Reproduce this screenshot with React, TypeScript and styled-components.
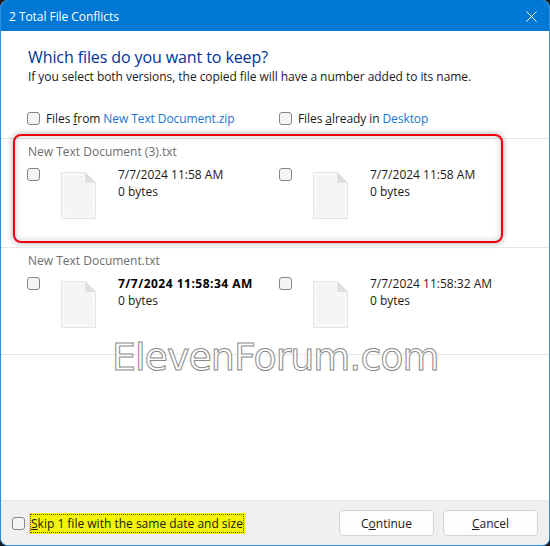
import styled, { createGlobalStyle } from 'styled-components';

const GlobalStyle = createGlobalStyle`
  html, body {
    margin: 0;
    padding: 0;
    background: #1c1c1c;
  }
`;

const FileIcon = () => (
  <svg width="35" height="47" viewBox="0 0 35 47" fill="none">
    <path d="M.5.5H24.5L34.5 10.5V46.5H.5Z" fill="#f8f8f8" stroke="#e4e4e4" />
    {Array.from({ length: 18 }, (_, i) => (
      <line key={i} x1="4" x2={i < 3 ? 23 : 31} y1={4.5 + i * 2.2} y2={4.5 + i * 2.2} stroke="#f0f0f0" />
    ))}
    <path d="M24.5.5V10.5H34.5Z" fill="#dedede" stroke="#e4e4e4" />
  </svg>
);

const CloseIcon = () => (
  <svg width="11" height="11" viewBox="0 0 11 11" stroke="#fff" strokeWidth="1">
    <line x1="0.5" y1="0.5" x2="10.5" y2="10.5" />
    <line x1="10.5" y1="0.5" x2="0.5" y2="10.5" />
  </svg>
);

const App = () => {
  return (
    <Page>
      <GlobalStyle />
      <TitleBar>
        <Title>2 Total File Conflicts</Title>
        <CloseIcon />
      </TitleBar>
      <Content>
        <Intro>
          <Heading>Which files do you want to keep?</Heading>
          <Subheading>If you select both versions, the copied file will have a number added to its name.</Subheading>
        </Intro>
        <SourceRow>
          <SourceLabel>
            <CheckBox />
            <span>
              Files <u>f</u>rom <Link>New Text Document.zip</Link>
            </span>
          </SourceLabel>
          <SourceLabel>
            <CheckBox />
            <span>
              Files <u>a</u>lready in <Link>Desktop</Link>
            </span>
          </SourceLabel>
        </SourceRow>
        <ConflictRow>
          <FileName>New Text Document (3).txt</FileName>
          <Versions>
            <Version>
              <CheckBox />
              <FileIcon />
              <Details>
                <span>7/7/2024 11:58 AM</span>
                <span>0 bytes</span>
              </Details>
            </Version>
            <Version>
              <CheckBox />
              <FileIcon />
              <Details>
                <span>7/7/2024 11:58 AM</span>
                <span>0 bytes</span>
              </Details>
            </Version>
          </Versions>
          <Highlight />
        </ConflictRow>
        <ConflictRow>
          <FileName>New Text Document.txt</FileName>
          <Versions>
            <Version>
              <CheckBox />
              <FileIcon />
              <Details>
                <strong>7/7/2024 11:58:34 AM</strong>
                <span>0 bytes</span>
              </Details>
            </Version>
            <Version>
              <CheckBox />
              <FileIcon />
              <Details>
                <span>7/7/2024 11:58:32 AM</span>
                <span>0 bytes</span>
              </Details>
            </Version>
          </Versions>
        </ConflictRow>
      </Content>
      <Footer>
        <SkipLabel>
          <CheckBox />
          <SkipText>
            <u>S</u>kip 1 file with the same date and size
          </SkipText>
        </SkipLabel>
        <Buttons>
          <Button>
            C<u>o</u>ntinue
          </Button>
          <Button>
            <u>C</u>ancel
          </Button>
        </Buttons>
      </Footer>
      <Watermark>ElevenForum.com</Watermark>
    </Page>
  );
};

const Page = styled.div`
  position: relative;
  box-sizing: border-box;
  width: 550px;
  height: 546px;
  display: flex;
  flex-direction: column;
  overflow: hidden;
  background: #fff;
  border: solid #2b8fdf;
  border-width: 0 1px 1px 1px;
  border-radius: 8px;
  font-family: 'Open Sans', 'Noto Sans', sans-serif;
  font-size: 12px;
  color: #1a1a1a;
`;

const TitleBar = styled.div`
  flex: none;
  height: 31px;
  padding: 2px 12px 0 8px;
  box-sizing: border-box;
  display: flex;
  align-items: center;
  justify-content: space-between;
  background: #0078d4;
  color: #fff;
`;

const Title = styled.span`
  font-size: 12px;
  letter-spacing: -0.05px;
`;

const Content = styled.div`
  flex: 1;
  display: flex;
  flex-direction: column;
`;

const Intro = styled.div`
  padding: 15px 0 0 27px;
`;

const Heading = styled.div`
  font-size: 16px;
  line-height: 23px;
  letter-spacing: -0.1px;
  color: #003399;
`;

const Subheading = styled.div`
  line-height: 16px;
  letter-spacing: -0.05px;
`;

const SourceRow = styled.div`
  display: grid;
  grid-template-columns: 252px 252px;
  padding: 24px 0 0 26px;
  height: 29px;
  letter-spacing: -0.08px;
`;

const SourceLabel = styled.div`
  display: flex;
  align-items: center;
  gap: 6px;
  height: 18px;
`;

const Link = styled.span`
  color: #1874cd;
`;

const CheckBox = styled.span`
  flex: none;
  box-sizing: border-box;
  width: 13px;
  height: 13px;
  background: #f5f5f5;
  border: 1px solid #858585;
  border-radius: 3px;
`;

const ConflictRow = styled.div`
  position: relative;
  box-sizing: border-box;
  height: 109px;
  padding: 5px 0 0 26px;
  border-top: 1px solid #e5e5e5;

  & + & {
    height: 108px;
    border-bottom: 1px solid #e5e5e5;
  }
`;

const FileName = styled.div`
  padding-left: 1px;
  line-height: 16px;
  color: #6d6d6d;
`;

const Versions = styled.div`
  display: grid;
  grid-template-columns: 252px 252px;
  margin-top: 6px;
`;

const Version = styled.div`
  display: flex;
  align-items: flex-start;

  ${CheckBox} {
    margin: 2px 21px 0 0;
  }

  svg {
    flex: none;
    margin-top: 6px;
  }
`;

const Details = styled.div`
  display: flex;
  flex-direction: column;
  margin-left: 22px;
  line-height: 17px;

  strong {
    font-weight: 700;
    letter-spacing: 0.5px;
    color: #000;
  }
`;

const Highlight = styled.div`
  position: absolute;
  left: 12px;
  top: -5px;
  width: 490px;
  height: 109px;
  box-sizing: border-box;
  border: 2px solid #f0000f;
  border-radius: 8px;
  box-shadow: 0 0 6px rgba(0, 0, 0, 0.35), inset 0 0 6px rgba(0, 0, 0, 0.2);
`;

const Footer = styled.div`
  flex: none;
  box-sizing: border-box;
  height: 45px;
  padding: 0 11px;
  display: flex;
  align-items: center;
  justify-content: space-between;
  background: #f0f0f0;
  border-top: 1px solid #e8e8e8;
`;

const SkipLabel = styled.div`
  display: flex;
  align-items: center;
  gap: 5px;
`;

const SkipText = styled.span`
  padding: 1px 0;
  line-height: 15px;
  background: #f5f500;
  border: 1px dotted #555;
  outline: 1px solid #f5f500;
`;

const Buttons = styled.div`
  display: flex;
  gap: 9px;
`;

const Button = styled.div`
  box-sizing: border-box;
  width: 95px;
  height: 26px;
  display: flex;
  align-items: center;
  justify-content: center;
  background: #fdfdfd;
  border: 1px solid #d4d4d4;
  border-radius: 4px;
`;

const Watermark = styled.div`
  position: absolute;
  left: 111px;
  top: 335px;
  font-family: 'DejaVu Sans', sans-serif;
  font-size: 38px;
  line-height: 44px;
  letter-spacing: -1px;
  color: #fff;
  -webkit-text-stroke: 1px #8a8a8a;
  text-shadow: 0 0 6px rgba(255, 255, 255, 0.9);
  white-space: nowrap;
`;

export default App;
